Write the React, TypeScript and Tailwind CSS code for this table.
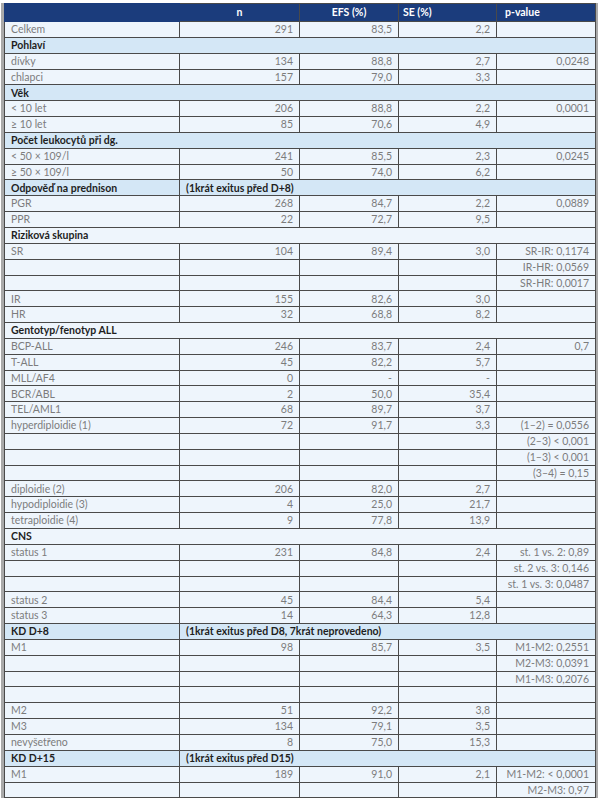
type DataRow = { kind: "data"; cells: [string, string, string, string, string] };
type SectionRow = { kind: "section"; label: string; note?: string; tint: boolean };
type Row = DataRow | SectionRow;

const d = (a: string, b = "", c = "", e = "", f = ""): DataRow => ({
  kind: "data",
  cells: [a, b, c, e, f],
});
const s = (label: string, tint: boolean, note?: string): SectionRow => ({
  kind: "section",
  label,
  tint,
  note,
});

const rows: Row[] = [
  d("Celkem", "291", "83,5", "2,2"),
  s("Pohlaví", true),
  d("dívky", "134", "88,8", "2,7", "0,0248"),
  d("chlapci", "157", "79,0", "3,3"),
  s("Věk", true),
  d("< 10 let", "206", "88,8", "2,2", "0,0001"),
  d("≥ 10 let", "85", "70,6", "4,9"),
  s("Počet leukocytů při dg.", true),
  d("< 50 × 109/l", "241", "85,5", "2,3", "0,0245"),
  d("≥ 50 × 109/l", "50", "74,0", "6,2"),
  s("Odpověď na prednison", true, "(1krát exitus před D+8)"),
  d("PGR", "268", "84,7", "2,2", "0,0889"),
  d("PPR", "22", "72,7", "9,5"),
  s("Riziková skupina", false),
  d("SR", "104", "89,4", "3,0", "SR-IR: 0,1174"),
  d("", "", "", "", "IR-HR: 0,0569"),
  d("", "", "", "", "SR-HR: 0,0017"),
  d("IR", "155", "82,6", "3,0"),
  d("HR", "32", "68,8", "8,2"),
  s("Gentotyp/fenotyp ALL", false),
  d("BCP-ALL", "246", "83,7", "2,4", "0,7"),
  d("T-ALL", "45", "82,2", "5,7"),
  d("MLL/AF4", "0", "-", "-"),
  d("BCR/ABL", "2", "50,0", "35,4"),
  d("TEL/AML1", "68", "89,7", "3,7"),
  d("hyperdiploidie (1)", "72", "91,7", "3,3", "(1–2) = 0,0556"),
  d("", "", "", "", "(2–3) < 0,001"),
  d("", "", "", "", "(1–3) < 0,001"),
  d("", "", "", "", "(3–4) = 0,15"),
  d("diploidie (2)", "206", "82,0", "2,7"),
  d("hypodiploidie (3)", "4", "25,0", "21,7"),
  d("tetraploidie (4)", "9", "77,8", "13,9"),
  s("CNS", false),
  d("status 1", "231", "84,8", "2,4", "st. 1 vs. 2: 0,89"),
  d("", "", "", "", "st. 2 vs. 3: 0,146"),
  d("", "", "", "", "st. 1 vs. 3: 0,0487"),
  d("status 2", "45", "84,4", "5,4"),
  d("status 3", "14", "64,3", "12,8"),
  s("KD D+8", true, "(1krát exitus před D8, 7krát neprovedeno)"),
  d("M1", "98", "85,7", "3,5", "M1-M2: 0,2551"),
  d("", "", "", "", "M2-M3: 0,0391"),
  d("", "", "", "", "M1-M3: 0,2076"),
  d(""),
  d("M2", "51", "92,2", "3,8"),
  d("M3", "134", "79,1", "3,5"),
  d("nevyšetřeno", "8", "75,0", "15,3"),
  s("KD D+15", true, "(1krát exitus před D15)"),
  d("M1", "189", "91,0", "2,1", "M1-M2: < 0,0001"),
  d("", "", "", "", "M2-M3: 0,97"),
];

const cell = "border border-[#4a4a4a] px-[6px] py-0 leading-none";

export default function App() {
  return (
    <div className="min-h-screen bg-white pt-[3px] pl-[1px] pr-[1px]" style={{ fontFamily: "Lato, 'Open Sans', sans-serif" }}>
      <div className="border-l-[3px] border-r-[2px] border-[#a9a9a9]">
        <table className="w-full border-collapse table-fixed text-[10.5px]">
          <colgroup>
            <col className="w-[175px]" />
            <col className="w-[120px]" />
            <col className="w-[99px]" />
            <col className="w-[98px]" />
            <col />
          </colgroup>
          <thead>
            <tr className="h-[18px] bg-[#1b3c7c] text-white font-bold">
              <th className="border border-[#1b3c7c]"></th>
              <th className="border border-[#4a4a4a] text-center">n</th>
              <th className="border border-[#4a4a4a] text-center">EFS (%)</th>
              <th className="border border-[#4a4a4a] text-left px-[4px]">SE (%)</th>
              <th className="border border-[#4a4a4a] text-left px-[8px]">p-value</th>
            </tr>
          </thead>
          <tbody>
            {rows.map((r, i) => {
              if (r.kind === "section") {
                const bg = r.tint ? "bg-[#d4e7f6]" : "bg-[#eef5fc]";
                return (
                  <tr key={i} className={`h-[15.85px] ${bg} text-[#1e1e1e] font-bold`}>
                    {r.note ? (
                      <>
                        <td className={cell}>{r.label}</td>
                        <td className={`${cell} whitespace-nowrap`} colSpan={4}>
                          {r.note}
                        </td>
                      </>
                    ) : (
                      <td className={cell} colSpan={5}>
                        {r.label}
                      </td>
                    )}
                  </tr>
                );
              }
              return (
                <tr key={i} className="h-[15.85px] bg-[#eef5fc] text-[#7c7c7c] font-normal">
                  {r.cells.map((c, j) => (
                    <td key={j} className={`${cell} ${j === 0 ? "text-left" : "text-right"} whitespace-nowrap`}>
                      {c}
                    </td>
                  ))}
                </tr>
              );
            })}
          </tbody>
        </table>
      </div>
    </div>
  );
}
